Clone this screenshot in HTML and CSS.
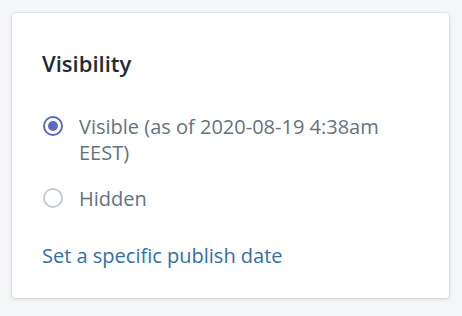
FILE: index.html
```html
<!DOCTYPE html>
<html lang="en">
<head>
<meta charset="utf-8">
<title>Visibility</title>
<link rel="stylesheet" href="styles.css">
</head>
<body>
<div class="page">
  <section class="card">
    <h2 class="card-title">Visibility</h2>
    <ul class="choices">
      <li class="choice">
        <span class="radio radio-checked"><span class="radio-dot"></span></span>
        <span class="choice-label">Visible (as of 2020-08-19 4:38am EEST)</span>
      </li>
      <li class="choice">
        <span class="radio"></span>
        <span class="choice-label">Hidden</span>
      </li>
    </ul>
    <a class="link" href="#">Set a specific publish date</a>
  </section>
</div>
</body>
</html>
```

FILE: styles.css
```css
html, body {
  margin: 0;
  padding: 0;
  background: #f4f6f8;
}
body {
  font-family: "Open Sans", "Noto Sans", "Liberation Sans", sans-serif;
  color: #212b36;
}
.page {
  padding: 13px 13px 18px 12px;
}
.card {
  background: #ffffff;
  border-radius: 4px;
  box-shadow: 0 0 0 1px rgba(63, 63, 68, 0.05), 0 1px 4px 0 rgba(63, 63, 68, 0.18);
  padding: 36px 30px 29px 30px;
}
.card-title {
  margin: 0;
  font-size: 22px;
  line-height: 28px;
  font-weight: 600;
  color: #212b36;
}
.choices {
  list-style: none;
  margin: 37px 0 0 0;
  padding: 0;
  display: flex;
  flex-direction: column;
  gap: 20px;
}
.choice {
  display: flex;
  align-items: flex-start;
  gap: 16px;
  font-size: 20px;
  line-height: 26px;
  color: #637381;
}
.radio {
  flex: none;
  box-sizing: border-box;
  width: 20px;
  height: 20px;
  margin-top: 2px;
  margin-left: 1px;
  border-radius: 50%;
  border: 2px solid #c4cdd5;
  background: #fff;
  display: flex;
  align-items: center;
  justify-content: center;
}
.radio-checked {
  border-color: #5c6ac4;
}
.radio-dot {
  width: 10px;
  height: 10px;
  border-radius: 50%;
  background: #5c6ac4;
}
.link {
  display: inline-block;
  margin-top: 31px;
  font-size: 20px;
  line-height: 26px;
  color: #2f70a8;
  text-decoration: none;
}
```
